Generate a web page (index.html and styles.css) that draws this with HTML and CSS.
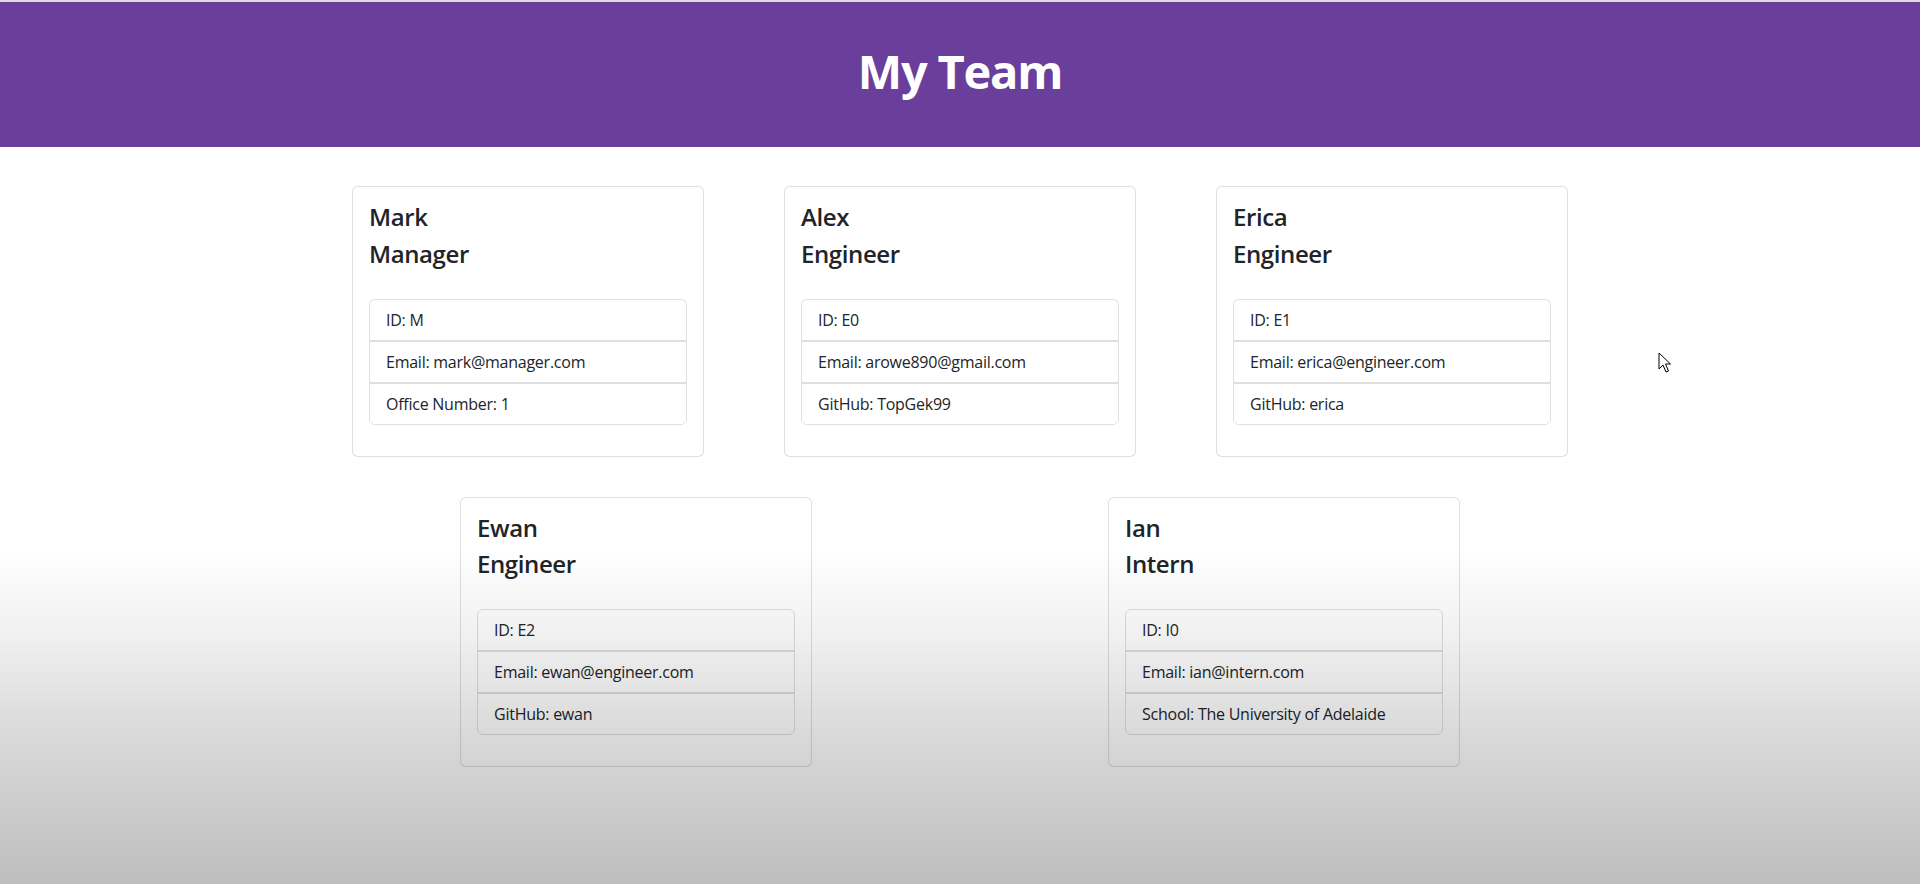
FILE: index.html
```html
<!DOCTYPE html>
<html lang="en">
<head>
<meta charset="utf-8">
<title>My Team</title>
<link rel="stylesheet" href="styles.css">
</head>
<body>
<header class="hero">
  <h1 class="hero-title">My Team</h1>
</header>
<main class="container">
  <div class="team">
    <div class="card">
      <div class="card-body">
        <h4 class="card-title">Mark</h4>
        <h4 class="card-title">Manager</h4>
        <ul class="list">
          <li class="list-item">ID: M</li>
          <li class="list-item">Email: mark@manager.com</li>
          <li class="list-item">Office Number: 1</li>
        </ul>
      </div>
    </div>
    <div class="card">
      <div class="card-body">
        <h4 class="card-title">Alex</h4>
        <h4 class="card-title">Engineer</h4>
        <ul class="list">
          <li class="list-item">ID: E0</li>
          <li class="list-item">Email: arowe890@gmail.com</li>
          <li class="list-item">GitHub: TopGek99</li>
        </ul>
      </div>
    </div>
    <div class="card">
      <div class="card-body">
        <h4 class="card-title">Erica</h4>
        <h4 class="card-title">Engineer</h4>
        <ul class="list">
          <li class="list-item">ID: E1</li>
          <li class="list-item">Email: erica@engineer.com</li>
          <li class="list-item">GitHub: erica</li>
        </ul>
      </div>
    </div>
    <div class="card">
      <div class="card-body">
        <h4 class="card-title">Ewan</h4>
        <h4 class="card-title">Engineer</h4>
        <ul class="list">
          <li class="list-item">ID: E2</li>
          <li class="list-item">Email: ewan@engineer.com</li>
          <li class="list-item">GitHub: ewan</li>
        </ul>
      </div>
    </div>
    <div class="card">
      <div class="card-body">
        <h4 class="card-title">Ian</h4>
        <h4 class="card-title">Intern</h4>
        <ul class="list">
          <li class="list-item">ID: I0</li>
          <li class="list-item">Email: ian@intern.com</li>
          <li class="list-item">School: The University of Adelaide</li>
        </ul>
      </div>
    </div>
  </div>
</main>
<div class="fade-overlay"></div>
<svg class="cursor" width="14" height="22" viewBox="0 0 14 22" xmlns="http://www.w3.org/2000/svg">
  <path d="M1 1 L1 17 L5 13 L8 20 L10.5 19 L7.5 12 L12.5 12 Z" fill="#ffffff" stroke="#000000" stroke-width="1" stroke-linejoin="miter"/>
</svg>
</body>
</html>
```

FILE: styles.css
```css
* {
  box-sizing: border-box;
}

html, body {
  margin: 0;
  padding: 0;
}

body {
  font-family: "Open Sans", "Noto Sans", "Liberation Sans", sans-serif;
  font-size: 16px;
  line-height: 1.5;
  color: #212529;
  background: #ffffff;
  min-height: 884px;
}

.hero {
  border-top: 2px solid #dcdbe0;
  background: #6a3e9b;
  height: 147px;
  display: flex;
  align-items: center;
  justify-content: center;
}

.hero-title {
  margin: 0;
  color: #ffffff;
  font-size: 47px;
  font-weight: 700;
  line-height: 1.2;
  letter-spacing: -1.2px;
  padding-bottom: 7px;
}

.container {
  width: 1320px;
  margin: 0 auto;
  padding: 19px 12px 0;
}

.team {
  display: flex;
  flex-wrap: wrap;
  justify-content: space-around;
}

.card {
  width: 352px;
  margin: 20px 0;
  background: #ffffff;
  border: 1px solid rgba(0, 0, 0, 0.125);
  border-radius: 6px;
}

.card-body {
  padding: 16px;
}

.card-title {
  margin: 0 0 8px;
  font-size: 24px;
  font-weight: 600;
  line-height: 28.8px;
  letter-spacing: -0.4px;
}

.card-title:nth-of-type(2) {
  margin-bottom: 0;
}

.list {
  list-style: none;
  margin: 30px 0 15px;
  padding: 0;
  border-radius: 6px;
}

.list-item {
  padding: 8px 16px;
  line-height: 24px;
  letter-spacing: -0.25px;
  border: 1px solid rgba(0, 0, 0, 0.125);
}

.list-item:first-child {
  border-top-left-radius: 6px;
  border-top-right-radius: 6px;
}

.list-item:last-child {
  border-bottom-left-radius: 6px;
  border-bottom-right-radius: 6px;
}

.fade-overlay {
  position: fixed;
  inset: 0;
  pointer-events: none;
  background: linear-gradient(to bottom, rgba(0, 0, 0, 0) 0%, rgba(0, 0, 0, 0) 62%, rgba(0, 0, 0, 0.06) 72%, rgba(0, 0, 0, 0.14) 82%, rgba(0, 0, 0, 0.26) 100%);
}

.cursor {
  position: fixed;
  left: 1658px;
  top: 352px;
}
```
